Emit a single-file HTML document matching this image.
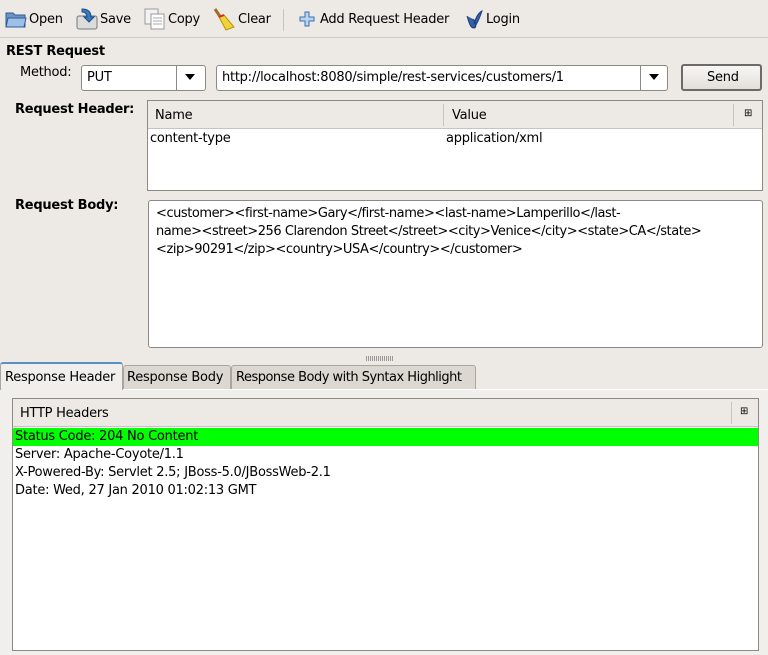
<!DOCTYPE html>
<html><head><style>
*{box-sizing:border-box;margin:0;padding:0}
body{width:768px;height:654px;background:#edeae5;font-family:"DejaVu Sans","Liberation Sans",sans-serif;font-size:13px;letter-spacing:-0.25px;color:#000;position:relative;overflow:hidden}
#w{position:absolute;left:0;top:1px;width:768px;height:654px}
.a{position:absolute;white-space:nowrap}
.tb span{position:absolute;top:11px}
.box{position:absolute;background:#fff;border:1px solid #8d8a85;border-radius:3px}
.btn{position:absolute;background:linear-gradient(#f7f6f4,#e3e0da);border:1px solid #8d8a85;border-radius:3px}
.hdr{position:absolute;background:#edeae5;border-bottom:1px solid #c8c4bd}
</style></head><body><div id="w">
<div class="tb">
<svg class="a" style="left:5px;top:8px" width="22" height="20"><path d="M1 4h7l2 2h10v12H1z" fill="#6a94c8" stroke="#2f5b93"/><path d="M3 9h18l-2 9H1z" fill="#9cc0ea" stroke="#2f5b93"/></svg>
<span style="left:29px">Open</span>
<svg class="a" style="left:76px;top:6px" width="22" height="24"><rect x="1" y="9" width="20" height="13" rx="2" fill="#dcdcdc" stroke="#777"/><path d="M6 2c6 0 9 3 9 8h3l-5 5-5-5h3c0-3-2-5-5-5z" fill="#3a78c0" stroke="#1f4e8a"/></svg>
<span style="left:100px">Save</span>
<svg class="a" style="left:144px;top:7px" width="22" height="22"><rect x="1" y="1" width="13" height="15" fill="#f3f3f3" stroke="#999"/><rect x="7" y="6" width="13" height="15" fill="#fff" stroke="#999"/><path d="M9 10h9M9 13h9M9 16h9" stroke="#aaa"/></svg>
<span style="left:168px">Copy</span>
<svg class="a" style="left:212px;top:6px" width="24" height="24"><path d="M3 2l6 9" stroke="#a56a2b" stroke-width="3"/><path d="M7 10l5-2 10 12-8 3z" fill="#f0d23a" stroke="#b79500"/><path d="M7 10l5-2" stroke="#d22" stroke-width="2"/></svg>
<span style="left:238px">Clear</span>
<div class="a" style="left:283px;top:8px;width:1px;height:22px;background:#c8c4bd"></div>
<svg class="a" style="left:299px;top:10px" width="16" height="16"><path d="M6 1h4v5h5v4h-5v5H6v-5H1V6h5z" fill="#bcd3ee" stroke="#3a6fb0"/></svg>
<span style="left:320px">Add Request Header</span>
<svg class="a" style="left:464px;top:7px" width="20" height="22"><path d="M3 8c2 6 3 12 7 12 3 0 2-6-1-9M10 20c3-4 6-11 8-17-4 2-7 8-8 13" fill="#3460a8" stroke="#1d3f80"/></svg>
<span style="left:486px">Login</span>
</div>
<div class="a" style="left:0;top:36px;width:768px;height:1px;background:#d0ccc5"></div>
<div class="a" style="left:6px;top:43px;font-weight:bold">REST Request</div>
<div class="a" style="left:20px;top:64px">Method:</div>
<div class="box" style="left:81px;top:64px;width:125px;height:26px"><span class="a" style="left:5px;top:4px">PUT</span><div class="a" style="left:94px;top:0;width:1px;height:24px;background:#8d8a85"></div><svg class="a" style="left:103px;top:8px" width="10" height="6"><path d="M0 0h10L5 6z"/></svg></div>
<div class="box" style="left:216px;top:64px;width:452px;height:26px"><span class="a" style="left:5px;top:4px">http://localhost:8080/simple/rest-services/customers/1</span><div class="a" style="left:423px;top:0;width:1px;height:24px;background:#8d8a85"></div><svg class="a" style="left:432px;top:8px" width="10" height="6"><path d="M0 0h10L5 6z"/></svg></div>
<div class="btn" style="left:681px;top:63px;width:81px;height:27px;border:2px solid #6e6b66"><span class="a" style="left:24px;top:4px">Send</span></div>
<div class="a" style="left:15px;top:101px;font-weight:bold">Request Header:</div>
<div class="box" style="left:147px;top:99px;width:616px;height:91px;border-radius:0">
<div class="hdr" style="left:0;top:0;width:614px;height:28px"><span class="a" style="left:7px;top:7px">Name</span><div class="a" style="left:295px;top:3px;width:1px;height:22px;background:#c8c4bd"></div><span class="a" style="left:304px;top:7px">Value</span><div class="a" style="left:585px;top:3px;width:1px;height:22px;background:#c8c4bd"></div><span class="a" style="left:596px;top:7px;font-size:10px">⊞</span></div>
<span class="a" style="left:2px;top:30px">content-type</span><span class="a" style="left:298px;top:30px">application/xml</span>
</div>
<div class="a" style="left:15px;top:197px;font-weight:bold">Request Body:</div>
<div class="box" style="left:148px;top:199px;width:615px;height:148px"><div style="position:absolute;left:7px;top:4px;width:600px;line-height:18px;white-space:nowrap;letter-spacing:-0.45px">&lt;customer&gt;&lt;first-name&gt;Gary&lt;/first-name&gt;&lt;last-name&gt;Lamperillo&lt;/last-<br>name&gt;&lt;street&gt;256 Clarendon Street&lt;/street&gt;&lt;city&gt;Venice&lt;/city&gt;&lt;state&gt;CA&lt;/state&gt;<br>&lt;zip&gt;90291&lt;/zip&gt;&lt;country&gt;USA&lt;/country&gt;&lt;/customer&gt;</div></div>
<div class="a" style="left:366px;top:355px;width:28px;height:5px;background:repeating-linear-gradient(90deg,#999 0 1px,transparent 1px 2px)"></div>
<div class="a" style="left:0;top:388px;width:768px;height:266px;background:#f1efeb;border-top:1px solid #fff"></div>
<div class="a" style="left:0;top:361px;width:123px;height:28px;background:#f1efeb;border:1px solid #a9a59f;border-bottom:none;border-top:2px solid #5b8fc8;border-radius:3px 3px 0 0"><span class="a" style="left:4px;top:6px">Response Header</span></div>
<div class="a" style="left:123px;top:364px;width:108px;height:24px;background:#dcd8d1;border:1px solid #a9a59f;border-bottom:none;border-radius:3px 3px 0 0"><span class="a" style="left:3px;top:4px">Response Body</span></div>
<div class="a" style="left:231px;top:364px;width:245px;height:24px;background:#dcd8d1;border:1px solid #a9a59f;border-bottom:none;border-radius:3px 3px 0 0"><span class="a" style="left:4px;top:4px;letter-spacing:-0.5px">Response Body with Syntax Highlight</span></div>
<div class="box" style="left:12px;top:397px;width:747px;height:253px;border-radius:0">
<div class="hdr" style="left:0;top:0;width:745px;height:28px"><span class="a" style="left:7px;top:7px">HTTP Headers</span><div class="a" style="left:718px;top:3px;width:1px;height:22px;background:#c8c4bd"></div><span class="a" style="left:727px;top:7px;font-size:10px">⊞</span></div>
<div class="a" style="left:0;top:29px;width:745px;height:18px;background:#00ff00"></div>
<span class="a" style="left:2px;top:30px">Status Code: 204 No Content</span>
<span class="a" style="left:2px;top:48px">Server: Apache-Coyote/1.1</span>
<span class="a" style="left:2px;top:66px">X-Powered-By: Servlet 2.5; JBoss-5.0/JBossWeb-2.1</span>
<span class="a" style="left:2px;top:84px">Date: Wed, 27 Jan 2010 01:02:13 GMT</span>
</div>
</div></body></html>
